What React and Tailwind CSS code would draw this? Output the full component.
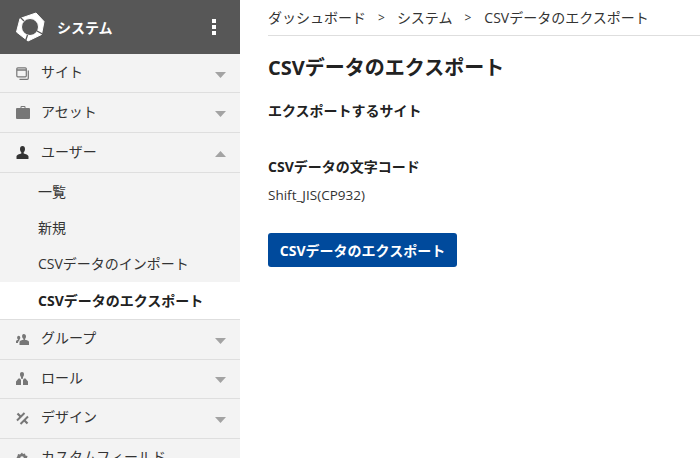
import React from 'react';

const font = 'font-["Segoe_UI","Open_Sans","Noto_Sans_CJK_JP",sans-serif]';

function Caret({ up }) {
  return (
    <svg width="11" height="6" viewBox="0 0 11 6" className="ml-auto mt-[3px]">
      <path d={up ? 'M5.5 0L11 6H0z' : 'M0 0h11L5.5 6z'} fill="#a3a3a3" />
    </svg>
  );
}

function Logo() {
  return (
    <svg width="30" height="30" viewBox="0 0 30 30">
      <path
        fillRule="evenodd"
        fill="#fff"
        stroke="#fff"
        strokeWidth="1"
        strokeLinejoin="round"
        d="M21 1l8 8.500-2.500 13L13 29 1.500 20 5 6.500zM15 6.500a8.500 8.500 0 1 0 0 17 8.500 8.500 0 0 0 0-17z"
      />
      <path stroke="#575757" strokeWidth="1.300" d="M9 9L4 4M22 19l5.500 3M12.500 23l-2 6" />
    </svg>
  );
}

const icons = {
  site: (
    <svg width="13" height="13" viewBox="0 0 13 13" fill="none" stroke="#777" strokeWidth="1.200">
      <rect x="0.800" y="0.800" width="9.500" height="9" rx="1" />
      <path d="M1 3h9" strokeWidth="1.500" />
      <path d="M12.300 3.500v7.800a1 1 0 0 1-1 1H3.500" />
    </svg>
  ),
  asset: (
    <svg width="14" height="13" viewBox="0 0 14 13" fill="#777">
      <path d="M4.500 2V1a1 1 0 0 1 1-1h3a1 1 0 0 1 1 1v1H13a1 1 0 0 1 1 1v9a1 1 0 0 1-1 1H1a1 1 0 0 1-1-1V3a1 1 0 0 1 1-1zm1 0h3V1h-3z" />
    </svg>
  ),
  user: (
    <svg width="13" height="13" viewBox="0 0 13 13" fill="#333">
      <path d="M6.500 0C8.200 0 9 1.300 9 3c0 1.500-.6 2.600-1.300 3.200v1.200c1.800.6 4.800 1.200 4.800 3.200v1.900a.5.5 0 0 1-.5.5H1a.5.5 0 0 1-.5-.5v-1.900c0-2 3-2.600 4.800-3.200V6.200C4.600 5.600 4 4.500 4 3c0-1.700.8-3 2.500-3z" />
    </svg>
  ),
  group: (
    <svg width="13" height="11" viewBox="0 0 13 11" fill="#777">
      <path d="M7.800 0C9.200 0 10 1 10 2.400c0 1.100-.5 2-1 2.500v.8c1.500.4 4 .8 4 2.300V11H3.500V8c0-1.500 2.500-1.900 4-2.300v-.8c-.6-.5-1.400-1.400-1.400-2.500C6.100 1 6.400 0 7.800 0z" />
      <path d="M2.700 1.800c.9 0 1.600.8 1.600 1.900 0 .8-.3 1.500-.8 1.900v.7L2.600 7.200C2.200 7.600 2 8.200 2 9H0V7.200c0-.9 1.300-1.200 2-1.500v-.2c-.5-.4-.9-1.100-.9-1.800 0-1.100.7-1.900 1.600-1.900z" />
    </svg>
  ),
  role: (
    <svg width="12" height="13" viewBox="0 0 12 13" fill="#777">
      <path d="M6 0c1.200 0 2 .9 2 2.200S7.500 4.500 7 5v1L6.500 7h-1L5 6V5c-.5-.5-1-1.500-1-2.800S4.800 0 6 0z" />
      <path d="M2.500 6.500h1.500l1 1.500v5H0V9.500zM8 6.500h1.500L12 9.500V13H7V8z" />
    </svg>
  ),
  design: (
    <svg width="13" height="13" viewBox="0 0 13 13" fill="none" stroke="#777">
      <path d="M1 8.500L8.500 1" strokeWidth="2" />
      <path d="M4.500 12L12 4.500" strokeWidth="2" />
      <path d="M1.500 1.500l3 3M8.500 8.500l3 3" strokeWidth="2.200" />
    </svg>
  ),
  field: (
    <svg width="12" height="12" viewBox="0 0 12 12">
      <path d="M6 0.500l1 1.500 2-.5.500 2 2 .5-.5 2 .5 2-2 .5-.5 2-2-.5L5 11.500 4 10l-2 .5-.5-2-1-2.500 1-2 .5-2 2 .5z" fill="#777" />
      <circle cx="6" cy="6" r="1.800" fill="#f3f3f3" />
    </svg>
  ),
};

function MenuRow({ icon, label, up, h = 'h-[40px]', noCaret }) {
  return (
    <div className={`flex items-center ${h} shrink-0 border-b border-[#dedede] pl-[15px] pr-[14px] text-[14px] text-[#333]`}>
      <span className="flex w-[26px] justify-start pl-px">{icons[icon]}</span>
      <span className="-mt-[3px]">{label}</span>
      {!noCaret && <Caret up={up} />}
    </div>
  );
}

function SubItem({ label, active, h = 'h-[36.330px]' }) {
  return (
    <div className={`flex ${h} shrink-0 items-center pl-[38px] text-[14px] ${active ? 'bg-white font-bold text-[#222]' : 'text-[#333]'}`}>
      {label}
    </div>
  );
}

export default function App() {
  return (
    <div className={`flex h-[458px] w-[700px] overflow-hidden bg-white ${font}`}>
      {/* Sidebar */}
      <aside className="flex w-[240px] shrink-0 flex-col overflow-hidden bg-[#f3f3f3]">
        <div className="flex h-[54px] shrink-0 items-center bg-[#575757] pl-[15px] pr-[24px]">
          <Logo />
          <span className="ml-[12px] text-[14px] font-bold text-white">システム</span>
          <span className="ml-auto flex flex-col gap-[2px]">
            <span className="h-[4px] w-[4px] bg-white" />
            <span className="h-[4px] w-[4px] bg-white" />
            <span className="h-[4px] w-[4px] bg-white" />
          </span>
        </div>
        <MenuRow icon="site" label="サイト" h="h-[39px]" />
        <MenuRow icon="asset" label="アセット" />
        <MenuRow icon="user" label="ユーザー" up />
        <SubItem label="一覧" />
        <SubItem label="新規" />
        <SubItem label="CSVデータのインポート" />
        <SubItem label="CSVデータのエクスポート" active h="h-[37px]" />
        <div className="h-px shrink-0 bg-[#dedede]" />
        <MenuRow icon="group" label="グループ" />
        <MenuRow icon="role" label="ロール" h="h-[39px]" />
        <MenuRow icon="design" label="デザイン" />
        <MenuRow icon="field" label="カスタムフィールド" noCaret />
      </aside>

      {/* Main */}
      <main className="min-w-0 flex-1 pl-[28px]">
        <nav className="flex h-[36px] items-center gap-[12px] border-b border-[#dedede] text-[14px] text-[#333]">
          <span>ダッシュボード</span>
          <span className="text-[12px]">&gt;</span>
          <span>システム</span>
          <span className="text-[12px]">&gt;</span>
          <span className="ml-px">CSVデータのエクスポート</span>
        </nav>
        <h1 className="mt-[17px] text-[20px] font-bold leading-[30px] text-[#222]">CSVデータのエクスポート</h1>
        <h2 className="mt-[18px] text-[14px] font-bold leading-[20px] text-[#222]">エクスポートするサイト</h2>
        <h2 className="mt-[36px] text-[14px] font-bold leading-[20px] text-[#222]">CSVデータの文字コード</h2>
        <p className="mt-[8px] text-[13.500px] leading-[20px] text-[#333]">Shift_JIS(CP932)</p>
        <button className="mt-[28px] flex h-[34px] w-[189px] items-center justify-center rounded-[3px] bg-[#004a9c] text-[14px] font-bold text-white">
          CSVデータのエクスポート
        </button>
      </main>
    </div>
  );
}
